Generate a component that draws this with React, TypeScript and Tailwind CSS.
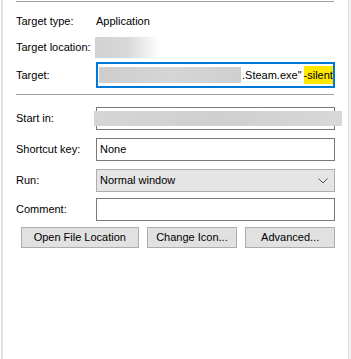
import React from 'react';

const font = { fontFamily: '"Liberation Sans", Arial, sans-serif' };

function Label({ children }: { children: React.ReactNode }) {
  return <div className="w-[80px] shrink-0 text-[11px] leading-none text-black whitespace-nowrap">{children}</div>;
}

function Field({ children }: { children?: React.ReactNode }) {
  return (
    <div className="flex-1 min-w-0 h-[23px] border border-[#7a7a7a] bg-white flex items-center px-[3px] text-[11px] text-black">
      {children}
    </div>
  );
}

function Btn({ label, w }: { label: string; w: string }) {
  return (
    <button className={`${w} h-[21px] border border-[#adadad] bg-[#e1e1e1] text-[11px] text-black flex items-center justify-center whitespace-nowrap`}>
      {label}
    </button>
  );
}

export default function App() {
  return (
    <div style={font} className="w-[351px] h-[359px] bg-white flex overflow-hidden">
      <div className="w-[3px] h-full bg-[#fcfcfc] border-l border-l-white border-r-2 border-r-[#e3e3e3]" />
      <div className="flex-1 min-w-0 flex flex-col pl-[13px] pr-[13px]">
        <div className="mt-[1px] h-px bg-[#a0a0a0] mr-px" />

        {/* Target type */}
        <div className="mt-[10px] h-[18px] flex items-center">
          <Label>Target type:</Label>
          <span className="text-[11px] text-black">Application</span>
        </div>

        {/* Target location */}
        <div className="mt-[7px] h-[21px] flex items-center">
          <Label>Target location:</Label>
          <div className="-ml-px w-[65px] h-[21px] bg-gradient-to-r from-[#d2d2d2] via-[#d9d9d9] to-white" />
        </div>

        {/* Target */}
        <div className="mt-[4px] h-[26px] flex items-center">
          <Label>Target:</Label>
          <div className="flex-1 min-w-0 h-[26px] border-2 border-[#0078d7] bg-white flex items-center pl-[1px] text-[11px] text-black whitespace-nowrap">
            <div className="w-[142px] h-[16px] shrink-0 bg-gradient-to-r from-[#cdcdcd] via-[#d6d6d6] to-[#cfcfcf]" />
            <span className="ml-px shrink-0">.Steam.exe"</span>
            <span className="ml-[2px] shrink-0 bg-[#ffe900] h-[18px] flex items-center">-silent</span>
          </div>
        </div>

        <div className="mt-[6px] h-px bg-[#a0a0a0] mr-px" />

        {/* Start in */}
        <div className="mt-[12px] flex items-center">
          <Label>Start in:</Label>
          <Field>
            <div className="-ml-[6px] -mr-[9px] w-[248px] h-[15px] shrink-0 bg-gradient-to-r from-[#d6d6d6] via-[#cfcfcf] to-[#d8d8d8]" />
          </Field>
        </div>

        {/* Shortcut key */}
        <div className="mt-[8px] flex items-center">
          <Label>Shortcut key:</Label>
          <Field>None</Field>
        </div>

        {/* Run */}
        <div className="mt-[8px] flex items-center">
          <Label>Run:</Label>
          <div className="flex-1 h-[23px] border border-[#adadad] bg-[#e5e5e5] flex items-center justify-between px-[3px] text-[11px] text-black">
            <span>Normal window</span>
            <svg width="10" height="6" viewBox="0 0 10 6" className="mr-[3px]">
              <polyline points="0.5,0.5 5,5 9.5,0.5" fill="none" stroke="#505050" strokeWidth="1" />
            </svg>
          </div>
        </div>

        {/* Comment */}
        <div className="mt-[6px] flex items-center">
          <Label>Comment:</Label>
          <Field />
        </div>

        {/* Buttons */}
        <div className="mt-[6px] flex items-center pl-[5px] gap-[8px]">
          <Btn label="Open File Location" w="w-[118px]" />
          <Btn label="Change Icon..." w="w-[91px]" />
          <Btn label="Advanced..." w="w-[90px]" />
        </div>
      </div>
      <div className="w-[3px] h-full bg-[#f0f0f0] border-l border-l-[#e3e3e3]" />
    </div>
  );
}
